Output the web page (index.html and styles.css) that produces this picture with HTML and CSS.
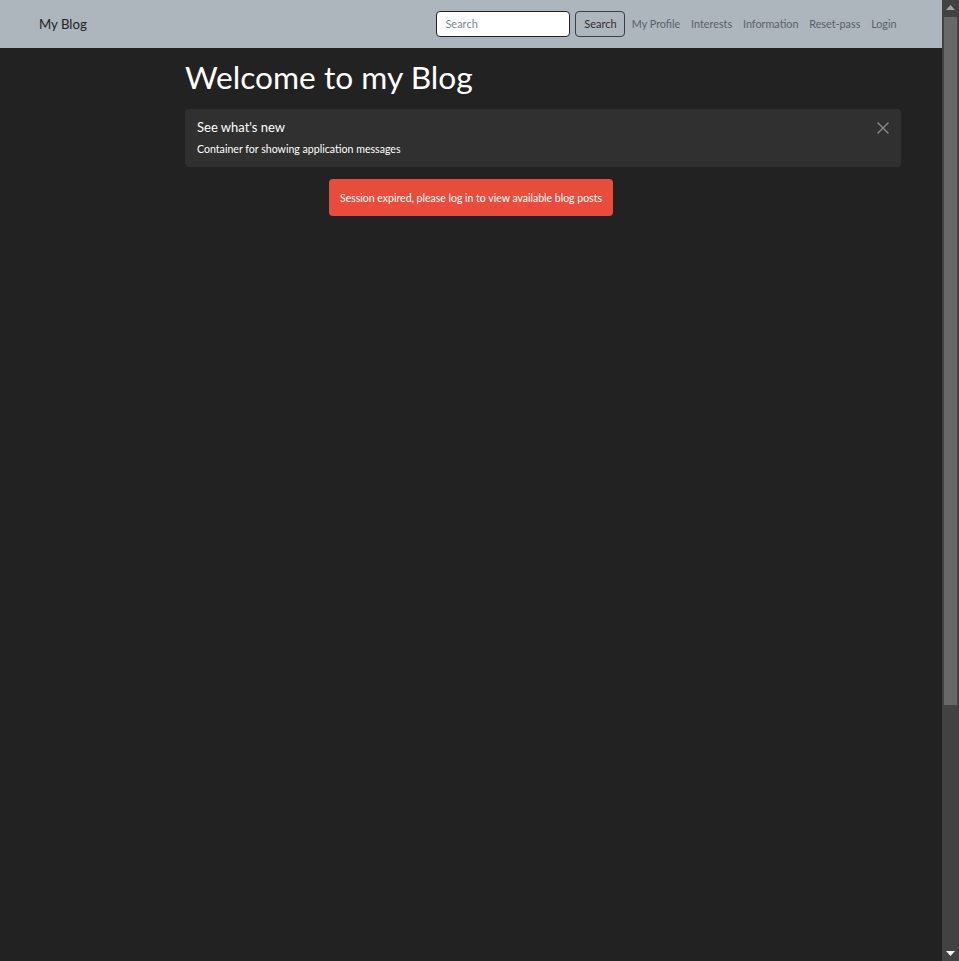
FILE: index.html
```html
<!DOCTYPE html>
<html lang="en">
<head>
<meta charset="utf-8">
<title>My Blog</title>
<link rel="stylesheet" href="styles.css">
</head>
<body>
<div class="app">
  <div class="page">
    <nav class="navbar">
      <a class="brand" href="#">My Blog</a>
      <div class="nav-right">
        <form class="search-form">
          <input class="search-input" type="search" placeholder="Search">
          <button class="search-btn" type="button">Search</button>
        </form>
        <ul class="nav-links">
          <li><a href="#">My Profile</a></li>
          <li><a href="#">Interests</a></li>
          <li><a href="#">Information</a></li>
          <li><a href="#">Reset-pass</a></li>
          <li><a href="#">Login</a></li>
        </ul>
      </div>
    </nav>
    <main class="main">
      <section class="content">
        <h1 class="title">Welcome to my Blog</h1>
        <div class="card">
          <div class="card-text">
            <h5 class="card-title">See what's new</h5>
            <p class="card-body">Container for showing application messages</p>
          </div>
          <button class="close" type="button" aria-label="Close">
            <svg width="12" height="12" viewBox="0 0 12 12"><path d="M0.5 0.5L11.5 11.5M11.5 0.5L0.5 11.5" stroke="#8a8a8a" stroke-width="1.4" fill="none"/></svg>
          </button>
        </div>
      </section>
      <div class="alert-row">
        <div class="alert">Session expired, please log in to view available blog posts</div>
      </div>
    </main>
  </div>
  <div class="scrollbar" aria-hidden="true">
    <div class="sb-arrow">
      <svg width="9" height="5" viewBox="0 0 9 5"><path d="M4.5 0L9 5H0z" fill="#a3a3a3"/></svg>
    </div>
    <div class="sb-track">
      <div class="sb-thumb"></div>
    </div>
    <div class="sb-arrow">
      <svg width="9" height="5" viewBox="0 0 9 5"><path d="M0 0H9L4.5 5z" fill="#f2f2f2"/></svg>
    </div>
  </div>
</div>
</body>
</html>
```
FILE: styles.css
```css
* {
  box-sizing: border-box;
}
html, body {
  height: 100%;
}
body {
  margin: 0;
  background: #222222;
  color: #ffffff;
  font-family: Lato, "Liberation Sans", sans-serif;
  overflow: hidden;
}
.app {
  display: flex;
  height: 100vh;
}
.page {
  flex: 1;
  min-width: 0;
}
.navbar {
  height: 48px;
  background: #adb5bd;
  display: flex;
  align-items: center;
  justify-content: space-between;
  padding: 0 40px 1px 39px;
}
.brand {
  color: #222222;
  text-decoration: none;
  font-size: 13.2px;
}
.nav-right {
  display: flex;
  align-items: center;
}
.search-form {
  display: flex;
  gap: 5px;
  margin-right: 1px;
}
.search-input {
  width: 134px;
  height: 26px;
  border: 1px solid #222;
  border-radius: 4px;
  background: #fff;
  color: #222;
  padding: 0 8px;
  font-family: Lato, sans-serif;
  font-size: 11px;
  outline: none;
}
.search-input::placeholder {
  color: #7c858d;
}
.search-btn {
  height: 26px;
  width: 50px;
  border: 1px solid #3a3f44;
  border-radius: 4px;
  background: transparent;
  color: #303030;
  font-family: Lato, sans-serif;
  font-size: 11px;
  padding: 0;
}
.nav-links {
  list-style: none;
  margin: 0;
  padding: 0;
  display: flex;
}
.nav-links a {
  display: block;
  padding: 0 5.4px;
  color: #59616a;
  text-decoration: none;
  font-size: 10.8px;
}
.main {
  display: flex;
  flex-direction: column;
}
.content {
  margin: 0 41px 0 185px;
}
.title {
  margin: 10px 0 13px;
  font-size: 31.7px;
  font-weight: 400;
  line-height: 38px;
}
.card {
  background: #303030;
  border-radius: 4px;
  height: 58px;
  display: flex;
  justify-content: space-between;
  padding: 10px 12px 0 12px;
}
.card-title {
  margin: 0;
  font-size: 13px;
  font-weight: 400;
  line-height: 16px;
}
.card-body {
  margin: 7px 0 0;
  font-size: 10.6px;
  line-height: 14px;
}
.close {
  background: transparent;
  border: 0;
  padding: 0;
  width: 12px;
  height: 12px;
  margin-top: 3px;
  display: flex;
}
.alert-row {
  display: flex;
  justify-content: center;
  margin-top: 12px;
}
.alert {
  background: #e74c3c;
  border-radius: 4px;
  height: 37px;
  padding: 0 11px;
  display: flex;
  align-items: center;
  font-size: 10.5px;
  color: #fff;
}
.scrollbar {
  width: 17px;
  height: 100%;
  background: #424242;
  display: flex;
  flex-direction: column;
}
.sb-arrow {
  height: 15px;
  display: flex;
  align-items: center;
  justify-content: center;
}
.sb-track {
  flex: 1;
  padding: 2px 2px 0 2px;
}
.sb-thumb {
  height: 688px;
  background: #686868;
}
```
